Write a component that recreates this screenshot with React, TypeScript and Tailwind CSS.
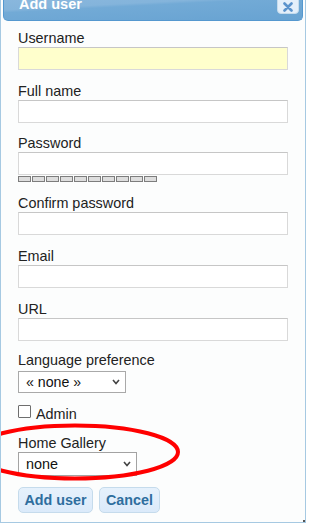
import React from "react";

const font = { fontFamily: '"Liberation Sans", Arial, sans-serif' };

function Label({ children }: { children: React.ReactNode }) {
  return <div className="block text-[14.4px] leading-[17px] text-[#222222]">{children}</div>;
}

function TextInput({ yellow }: { yellow?: boolean }) {
  return (
    <div
      className={
        "w-[270px] h-[23px] border border-[#d9d9d9] border-t-[#c6c6c6] " +
        (yellow ? "bg-[#ffffcc]" : "bg-white")
      }
    />
  );
}

function Chevron() {
  return (
    <svg width="8" height="6" viewBox="0 0 8 6" className="block">
      <polyline points="1,1 4,4.5 7,1" fill="none" stroke="#444" strokeWidth="1.6" />
    </svg>
  );
}

export default function App() {
  return (
    <div className="w-[307px] h-[524px] bg-white" style={font}>
      <div className="relative w-[306px] h-[523px] border border-t-0 border-[#a6c9e2] bg-[#fcfdfd] px-[2px] overflow-hidden">
        {/* Header */}
        <div className="flex items-start justify-between h-[21px] rounded-b-[5px] border border-t-0 border-[#5598cf] bg-[linear-gradient(177deg,#89b7dd_0%,#84b4db_28%,#72aad6_36%,#68a3d2_100%)] pl-[15px] pr-[3px] overflow-hidden">
          <span className="text-[14.5px] leading-[15px] font-bold text-white -mt-[3px]">Add user</span>
          <div className="w-[22px] h-[21px] -mt-[7px] rounded-[4px] border border-[#c5dbec] bg-[#e4effa] flex items-center justify-center">
            <svg width="10" height="10" viewBox="0 0 10 10" className="mt-[6px]">
              <path d="M1.5 1.5 L8.5 8.5 M8.5 1.5 L1.5 8.5" stroke="#5b93cc" strokeWidth="2.6" strokeLinecap="round" />
            </svg>
          </div>
        </div>

        {/* Body */}
        <div className="flex flex-col pl-[15px] pt-[9px]">
          <div className="mb-[13px]">
            <Label>Username</Label>
            <TextInput yellow />
          </div>
          <div className="mb-[12px]">
            <Label>Full name</Label>
            <TextInput />
          </div>
          <div className="mb-[13px]">
            <Label>Password</Label>
            <TextInput />
            <div className="flex gap-[1px] mt-[1px]">
              {Array.from({ length: 10 }).map((_, i) => (
                <div key={i} className="w-[13px] h-[6px] border border-[#7d7d7d] bg-[#dedede]" />
              ))}
            </div>
          </div>
          <div className="mb-[13px]">
            <Label>Confirm password</Label>
            <TextInput />
          </div>
          <div className="mb-[13px]">
            <Label>Email</Label>
            <TextInput />
          </div>
          <div className="mb-[11px]">
            <Label>URL</Label>
            <TextInput />
          </div>
          <div className="mb-[12px]">
            <Label>Language preference</Label>
            <div className="mt-[2px] w-[108px] h-[22px] border border-[#a9a9a9] bg-white flex items-center justify-between pl-[7px] pr-[5px]">
              <span className="text-[14.2px] leading-[16px] text-[#111]">« none »</span>
              <Chevron />
            </div>
          </div>
          <div className="flex items-start mb-[12px] h-[18px]">
            <div className="w-[13px] h-[13px] border border-[#6e6e6e] bg-white rounded-[1px]" />
            <span className="ml-[5px] mt-[1px] text-[14.4px] leading-[17px] text-[#222222]">Admin</span>
          </div>
          <div className="mb-[11px]">
            <Label>Home Gallery</Label>
            <div className="w-[119px] h-[24px] border border-[#a3a3a3] bg-white flex items-center justify-between pl-[7px] pr-[5px]">
              <span className="text-[14.4px] leading-[16px] text-[#111]">none</span>
              <Chevron />
            </div>
          </div>
          <div className="flex gap-[6px]">
            <button className="w-[75px] h-[26px] rounded-[5px] border border-[#c5dbec] bg-[linear-gradient(180deg,#e6f1fc_0%,#dbeafa_100%)] text-[14.3px] font-bold text-[#2e6e9e] leading-[16px]">
              Add user
            </button>
            <button className="w-[61px] h-[26px] rounded-[5px] border border-[#c5dbec] bg-[linear-gradient(180deg,#e6f1fc_0%,#dbeafa_100%)] text-[14.3px] font-bold text-[#2e6e9e] leading-[16px]">
              Cancel
            </button>
          </div>
        </div>

        {/* Red annotation ellipse */}
        <svg className="absolute left-[-1px] top-0 pointer-events-none" width="307" height="524" viewBox="0 0 307 524">
          <ellipse cx="75" cy="452" rx="103" ry="26.5" fill="none" stroke="#ff0000" strokeWidth="4" />
        </svg>
        <div className="absolute right-0 bottom-0 w-[2px] h-[2px] bg-[#555]" />
      </div>
    </div>
  );
}
